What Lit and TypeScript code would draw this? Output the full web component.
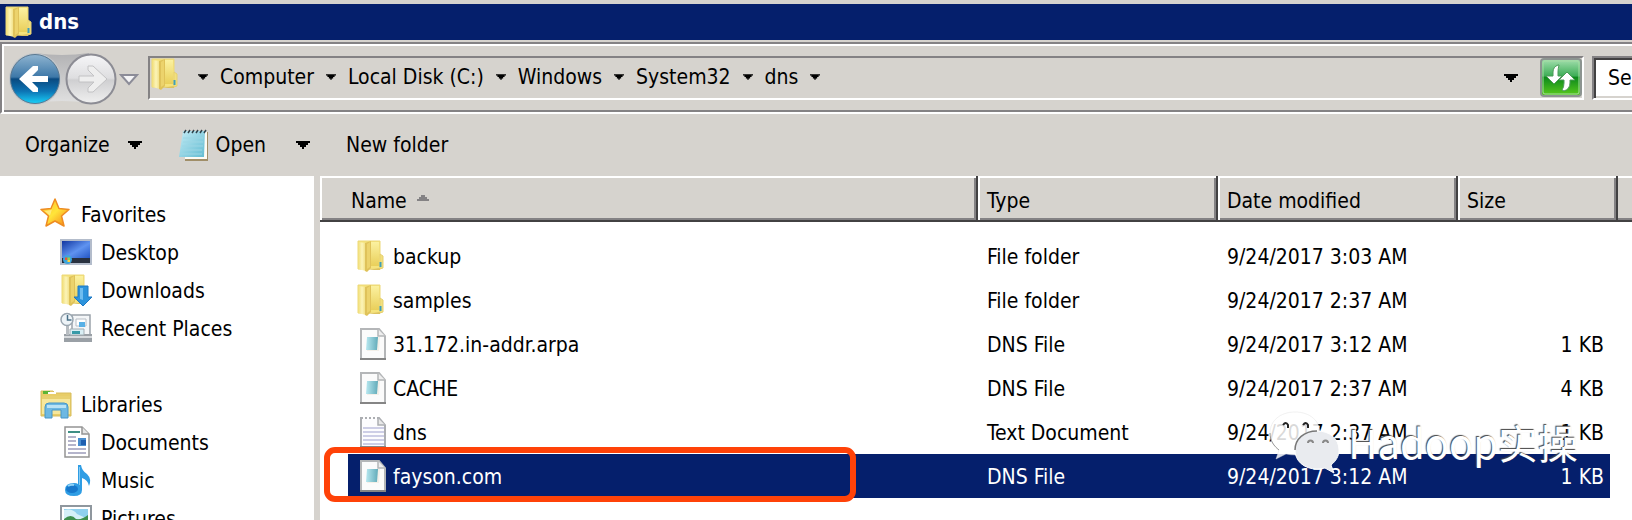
import { LitElement, html, css, svg, nothing } from "lit";
import { customElement } from "lit/decorators.js";

type IconName =
  | "folder" | "star" | "desktop" | "downloads" | "recent" | "libraries"
  | "documents" | "music" | "pictures" | "file" | "text" | "notepad";

interface Entry { name: string; icon: IconName; type: string; date: string; size: string; selected?: boolean; }

const crumbs = ["Computer", "Local Disk (C:)", "Windows", "System32", "dns"];

const entries: Entry[] = [
  { name: "backup", icon: "folder", type: "File folder", date: "9/24/2017 3:03 AM", size: "" },
  { name: "samples", icon: "folder", type: "File folder", date: "9/24/2017 2:37 AM", size: "" },
  { name: "31.172.in-addr.arpa", icon: "file", type: "DNS File", date: "9/24/2017 3:12 AM", size: "1 KB" },
  { name: "CACHE", icon: "file", type: "DNS File", date: "9/24/2017 2:37 AM", size: "4 KB" },
  { name: "dns", icon: "text", type: "Text Document", date: "9/24/2017 2:37 AM", size: "1 KB" },
  { name: "fayson.com", icon: "file", type: "DNS File", date: "9/24/2017 3:12 AM", size: "1 KB", selected: true },
];

const groups: { name: string; icon: IconName; items: { name: string; icon: IconName }[] }[] = [
  { name: "Favorites", icon: "star", items: [
    { name: "Desktop", icon: "desktop" },
    { name: "Downloads", icon: "downloads" },
    { name: "Recent Places", icon: "recent" },
  ] },
  { name: "Libraries", icon: "libraries", items: [
    { name: "Documents", icon: "documents" },
    { name: "Music", icon: "music" },
    { name: "Pictures", icon: "pictures" },
  ] },
];

const folderBody = svg`
  <path d="M2 1h22v28H2z" fill="#f5e37c" stroke="#ecd879" stroke-width="1"/>
  <path d="M15 2h8v24h-8z" fill="url(#fb)"/>
  <path d="M2 2l8 1v28l-8-2z" fill="url(#fa)"/>
  <path d="M9 3l6-2v27l-4 4-2-1z" fill="#dfc25a"/>
  <path d="M11 4l3-2v25l-3 2z" fill="#ecd36c"/>
  <path d="M12 30l12-2v2H12z" fill="#dcc260"/>
  <defs>
    <linearGradient id="fa" x1="0" x2="1"><stop offset="0" stop-color="#f0dc74"/><stop offset=".5" stop-color="#fcf4b8"/><stop offset="1" stop-color="#efdc7c"/></linearGradient>
    <linearGradient id="fb" x1="0" y1="0" x2="0" y2="1"><stop offset="0" stop-color="#fbf1a0"/><stop offset="1" stop-color="#e9cf5a"/></linearGradient>
  </defs>`;

const art: Record<IconName, unknown> = {
  folder: svg`${folderBody}
    <path d="M24 14l3 2v12l-3 1z" fill="#f2e07d" stroke="#e6d070"/>
    <path d="M23.500 22h2v5h-2z" fill="#3f9fb8"/>`,
  star: svg`<defs><linearGradient id="st" x1="0" y1="0" x2="1" y2="1"><stop offset="0" stop-color="#ffb52a"/><stop offset=".5" stop-color="#ffe53a"/><stop offset="1" stop-color="#f77b12"/></linearGradient></defs>
    <path d="M15 1l4 9.500 10 1-7.500 6.500 2.500 10-9-5-9 5 2.500-10L1 11.500l10-1z" fill="url(#st)" stroke="#ee8c22" stroke-width="1.500" stroke-linejoin="round"/>
    <path d="M14 5l-2.500 7-7 1 5.500 4.500z" fill="#fff19a" opacity=".7"/>`,
  desktop: svg`<defs><linearGradient id="ds" x1="0" y1="0" x2="1" y2="1"><stop offset="0" stop-color="#1236a0"/><stop offset=".55" stop-color="#5f93f0"/><stop offset="1" stop-color="#2456c4"/></linearGradient></defs>
    <path d="M0 3h32v26H0z" fill="#b3bccb"/><path d="M2 5h28v17H2z" fill="url(#ds)"/>
    <path d="M2 22h28v5H2z" fill="#28313f"/><circle cx="7.500" cy="23.500" r="4.500" fill="#3da5dc"/>
    <path d="M5 21.500h2.500V24H5z" fill="#e8543a"/><path d="M7.500 21.500H10V24H7.500z" fill="#8fd14f"/><path d="M7.500 24H10v2H7.500z" fill="#ffd23c"/>`,
  downloads: svg`${folderBody}
    <path d="M18 12h10v11h4l-9 9-9-9h4z" fill="#2c93dc" stroke="#1d78c4"/><path d="M20 14h3v12l-3-1z" fill="#6fbdf0"/>`,
  recent: svg`<path d="M12 3h18v20H12z" fill="#f4f6f8" stroke="#9aa3ab" stroke-width="1.500"/>
    <path d="M16 7h10v7H16z" fill="#fff" stroke="#b7bec6"/><path d="M19 10h6v5h-6z" fill="#58b0e6"/>
    <path d="M4 22h28v8H4z" fill="#9aa0a6"/><path d="M6 14h3v9H6z" fill="#b8bdc2"/>
    <path d="M10 17h14v6H10z" fill="#d8eef4" stroke="#a3adb3"/><path d="M12 19h8v3h-8z" fill="#379aa8"/>
    <path d="M4 24h28v2H4z" fill="#d7dadd"/>
    <circle cx="7" cy="7.500" r="6" fill="#eef4f8" stroke="#9aa6b0" stroke-width="1.500"/><path d="M7.500 3v5h4" fill="none" stroke="#4a7188" stroke-width="1.500"/>`,
  libraries: svg`<path d="M1 3h12l2 2h16v23H1z" fill="#e8cd68" stroke="#d8bd5c"/><path d="M3 3h7v3H3z" fill="#5cb536"/><path d="M8 4h8v2h-8z" fill="#fff"/>
    <path d="M2 9h28v17H2z" fill="#f6e79c"/><path d="M2 8h28v3H2z" fill="#e8d070"/>
    <path d="M5 19q0-4 4-4h15q4 0 4 4v11h-7v-8h-9v8H5z" fill="#6db8e2" stroke="#4796c8"/><path d="M7 17h19v3H7z" fill="#b9e2f5"/>`,
  documents: svg`<path d="M5 1h17l7 7v23H5z" fill="#fff" stroke="#949494" stroke-width="1.500"/><path d="M22 1v7h7" fill="#e6e6e6" stroke="#949494" stroke-width="1.500"/>
    <path d="M8 5h12v2H8z" fill="#3f8f84"/><path d="M8 11h8M8 15h8M8 19h8M8 23h18M8 27h18" stroke="#9c9cba" stroke-width="1.500"/>
    <path d="M18 12h8v8h-8z" fill="#4a8ed0"/><path d="M21 14h5v5h-5z" fill="#1f5fb0"/>`,
  music: svg`<path d="M18 1h3q1 6 6 9 5 5 2 12-1-6-7-8v12q0 6-8 6-9 0-9-6 0-7 9-7 3 0 4 1z" fill="#2f9de4"/>
    <ellipse cx="12" cy="25" rx="6" ry="4" fill="#1678cc"/><path d="M19 3h1v18h-1z" fill="#85caf3"/><path d="M8 22q3-2 6-1" stroke="#8ed2f8" stroke-width="2" fill="none"/>`,
  pictures: svg`<path d="M1 4h30v26H1z" fill="#fff" stroke="#8f979e" stroke-width="2"/><path d="M4 7h24v20H4z" fill="#8fd0ee"/>
    <path d="M4 8q9-2 13 4l11 5v10H4z" fill="#d5f0f8"/><path d="M4 17q7-6 12 0 6 1 12-4v14H4z" fill="#3e8f4d"/>`,
  file: svg`<defs><linearGradient id="fi"><stop offset="0" stop-color="#b8e8f0"/><stop offset="1" stop-color="#62abb9"/></linearGradient></defs>
    <path d="M5 1h18l6 7v23H5z" fill="#fbfbfb" stroke="#b4b6b8" stroke-width="2"/><path d="M22 1v7h7" fill="#eee" stroke="#b4b6b8" stroke-width="1.500"/>
    <path d="M12 9h12l-1 14H11z" fill="#f3efe8"/><path d="M11 9h11l-1 13H10z" fill="url(#fi)"/><path d="M4 31h26" stroke="#858585" stroke-width="2"/>`,
  text: svg`<path d="M5 2h18l6 7v22H5z" fill="#fcfcfe" stroke="#acaeb2" stroke-width="2"/><path d="M22 2v7h7" fill="#e8e8e8" stroke="#acaeb2" stroke-width="1.500"/>
    <path d="M7 2h15" stroke="#fff" stroke-width="3" stroke-dasharray="2 2"/>
    <path d="M7 12h21M7 16h21M7 20h21M7 24h21M7 28h21" stroke="#cdcee6" stroke-width="2"/><path d="M4 31h26" stroke="#858585" stroke-width="2"/>`,
  notepad: svg`<defs><linearGradient id="np" x1="0" y1="0" x2="1" y2="1"><stop offset="0" stop-color="#c4ecf5"/><stop offset="1" stop-color="#62bcd2"/></linearGradient></defs>
    <path d="M7 3h23v29H7z" fill="#a08e68"/><path d="M7 3h22v27H7z" fill="#fdfbf4"/>
    <path d="M5 2h22l-1 26H1z" fill="url(#np)"/>
    <path d="M5 9h20M5 13h20M4 17h21M4 21h20M3 25h21" stroke="#9cd6e4"/>
    <path d="M6 4l2-3M10 4l2-3M14 4l2-3M18 4l2-3M22 4l2-3M26 4l2-3" stroke="#30434c" stroke-width="1.500"/>`,
};

const icon = (name: IconName, cls = "") =>
  html`<svg class="icon ${cls}" viewBox="0 0 32 32" aria-hidden="true">${art[name]}</svg>`;

const caret = (big = false) => html`<svg class=${big ? "caret big" : "caret"} viewBox="0 0 14 8" aria-hidden="true">
  <path d="M0 0h14v2h-2v2h-2v2H8v2H6V6H4V4H2V2H0z"/></svg>`;

@customElement("app-root")
export class AppRoot extends LitElement {
  static styles = css`
    :host {
      display: flex; flex-direction: column; height: 100vh; overflow: hidden; position: relative;
      background: #d6d3ce; color: #000;
      font: 21px/26px "DejaVu Sans Condensed", "DejaVu Sans", Tahoma, sans-serif;
    }
    * { box-sizing: border-box; }
    button { font: inherit; color: inherit; background: none; border: 0; padding: 0; margin: 0; text-align: left; display: flex; align-items: center; white-space: nowrap; }
    a { color: inherit; text-decoration: none; }
    svg { display: block; flex: none; }
    .icon { width: 32px; height: 32px; }
    .caret { width: 10px; height: 6px; }
    .caret.big { width: 14px; height: 8px; }

    .title { margin: 4px 0 2px; padding: 0 4px; height: 36px; flex: none; display: flex; align-items: center; gap: 3px; background: #051f6c; color: #fff; }
    .title h1 { margin: 0; font-size: 22px; font-weight: bold; }

    .nav { flex: none; display: flex; align-items: center; height: 72px; padding: 0 0 0 6px;
      border-top: 2px solid #848284; border-left: 2px solid #848284; border-bottom: 2px solid #fff;
      box-shadow: inset 2px 2px #fff, inset 0 -2px #848284; }
    .travel { display: flex; align-items: center; margin-right: 8px; }
    .travel .pair { width: 110px; height: 56px; display: flex; position: relative; }
    .travel .pair > svg { position: absolute; inset: 0; width: 110px; height: 56px; }
    .travel .pair button { flex: 1; z-index: 1; }
    .history { width: 22px; justify-content: center; padding-top: 4px; }
    .history svg { width: 20px; height: 14px; }
    .address { flex: 1; min-width: 0; height: 44px; display: flex; align-items: center;
      border: 2px solid #fff; border-top-color: #848284; border-left-color: #848284; }
    .address .icon { margin-bottom: 8px; }
    .crumbs { display: flex; align-items: center; gap: 12px; margin: 0 0 2px 16px; padding: 0; list-style: none; flex: 1; }
    .crumbs li { display: flex; align-items: center; gap: 12px; white-space: nowrap; }
    .more { margin-right: 22px; }
    .refresh, .refresh svg { width: 42px; height: 40px; }
    .search { flex: none; width: 40px; height: 44px; margin-left: 8px; border: 2px solid #848284; border-right: 0; border-bottom-color: #fff;
      box-shadow: inset 2px 2px #424142, inset 0 -2px #d6d3ce; background: #fff; display: flex; padding: 2px 0 2px 14px; }
    .search input { flex: none; width: 160px; border: 0; padding: 0; background: none; font: inherit; color: #000; outline: 0; }
    .search input::placeholder { color: #000; opacity: 1; }

    .commands { flex: none; height: 62px; display: flex; align-items: center; padding-left: 25px; }
    .organize { gap: 18px; margin-right: 36px; }
    .open { gap: 6px; margin-right: 30px; }
    .arrow { margin-right: 36px; }

    .body { flex: 1; min-height: 0; display: flex; background: #fff; }
    .tree { flex: none; width: 320px; border-right: 6px solid #d6d3ce; padding-top: 19px; overflow: hidden; }
    .tree ul { list-style: none; margin: 0 0 38px; padding: 0; }
    .tree a { display: flex; align-items: center; gap: 9px; height: 38px; padding-left: 60px; white-space: nowrap; }
    .tree .group { padding-left: 40px; }
    .label { padding-top: 2px; }

    .list { flex: 1; min-width: 0; }
    table { width: 100%; table-layout: fixed; border-collapse: separate; border-spacing: 0; }
    .c-gutter { width: 28px; } .c-mid { width: 240px; } .c-size { width: 152px; } .c-pad { width: 8px; } .c-rest { width: 14px; }
    th { height: 46px; padding: 4px 9px 0; font-weight: normal; text-align: left; background: #d6d3ce;
      box-shadow: inset 0 -2px #424142, inset -2px 0 #424142, inset 2px 2px #fff, inset -4px -4px #848284; }
    th.first { padding-left: 31px; }
    th.last { box-shadow: inset 0 -2px #424142, inset 0 2px #fff, inset 0 -4px #848284; }
    th button { gap: 10px; width: 100%; }
    th .sort { width: 12px; height: 6px; margin-bottom: 6px; }
    tbody::before { content: ""; display: table-row; height: 12px; }
    td { height: 44px; padding: 2px 9px 0; white-space: nowrap; }
    .name { padding: 0 0 0 8px; position: relative; }
    .name a { display: flex; align-items: center; gap: 5px; }
    .size { text-align: right; padding-right: 6px; }
    .selected .fill { background: #051f6c; color: #fff; }
    .mark { position: absolute; left: -24px; top: -7px; width: 532px; height: 55px; border: 6px solid #ff4208; border-radius: 11px; pointer-events: none; }

    .watermark { position: absolute; right: 54px; bottom: 46px; display: flex; align-items: center; gap: 7px; pointer-events: none;
      font: 40px/56px "Noto Sans CJK SC", sans-serif; color: #fff; text-shadow: -1px -1px 1px #444; }
    .watermark svg { width: 72px; height: 64px; }
  `;

  render() {
    return html`
      <header class="title">${icon("folder")}<h1>dns</h1></header>
      <nav class="nav" aria-label="Location">
        <div class="travel">
          <div class="pair">
            <svg viewBox="0 0 110 56" aria-hidden="true">
              <defs>
                <linearGradient id="pl" x1="0" y1="0" x2="0" y2="1"><stop offset="0" stop-color="#b2b2b4"/><stop offset="1" stop-color="#e0e0e0"/></linearGradient>
                <linearGradient id="bk" x1="0" y1="0" x2="0" y2="1"><stop offset="0" stop-color="#8fb4d0"/><stop offset=".46" stop-color="#3d78a8"/><stop offset=".5" stop-color="#0a4a80"/><stop offset=".75" stop-color="#0d74b4"/><stop offset="1" stop-color="#19d0f8"/></linearGradient>
                <linearGradient id="fw" x1="0" y1="0" x2="0" y2="1"><stop offset="0" stop-color="#f6f6f8"/><stop offset=".48" stop-color="#dedee0"/><stop offset=".52" stop-color="#cfcfd1"/><stop offset="1" stop-color="#f0f0f0"/></linearGradient>
              </defs>
              <path d="M27 3q27 4 54 0v50q-27-4-54 0z" fill="url(#pl)"/>
              <circle cx="27" cy="29" r="26" fill="#c4c8cc"/>
              <circle cx="27" cy="29" r="24.500" fill="url(#bk)" stroke="#5a7890"/>
              <path d="M11 29l14-13h5v4l-6 6h16v6H24l6 6v4h-5z" fill="#fff"/>
              <circle cx="83" cy="29" r="24.500" fill="url(#fw)" stroke="#8c8c94" stroke-width="2"/>
              <path d="M99 29L85 16h-5v4l6 6H71v6h15l-6 6v4h5z" fill="#eeeeee" stroke="#c2c2c4"/>
            </svg>
            <button aria-label="Back"></button><button aria-label="Forward"></button>
          </div>
          <button class="history" aria-label="Recent locations">
            <svg viewBox="0 0 20 14"><path d="M2 2h16l-8 9z" fill="#f4f4f6" stroke="#8c8c98" stroke-width="2"/></svg>
          </button>
        </div>
        <div class="address">
          ${icon("folder")}
          <ol class="crumbs">
            <li>${caret()}</li>
            ${crumbs.map((c) => html`<li><a href="#">${c}</a>${caret()}</li>`)}
          </ol>
          <button class="more" aria-label="Previous locations">${caret(true)}</button>
          <button class="refresh" aria-label="Refresh">
            <svg viewBox="0 0 42 40">
              <defs><linearGradient id="rf" x1="0" y1="0" x2="0" y2="1"><stop offset="0" stop-color="#a5e0b0"/><stop offset=".45" stop-color="#3fae58"/><stop offset=".5" stop-color="#0d8a1c"/><stop offset="1" stop-color="#5ccc1c"/></linearGradient></defs>
              <rect x="1" y="1" width="40" height="37" rx="3" fill="url(#rf)" stroke="#8c9490" stroke-width="2"/>
              <rect x="3" y="3" width="36" height="33" rx="2" fill="none" stroke="#a6dca4" stroke-width="1"/>
              <path d="M18 7q-5 2-5 7v4H6l8 8 8-8h-4v-4q0-3 1-7z" fill="#fff" stroke="#4c9a58"/>
              <path d="M24 33q6-2 6-8v-3h5l-8-8-8 8h5v3q0 4-2 7z" fill="#fff" stroke="#4c9a58"/>
            </svg>
          </button>
        </div>
        <div class="search"><input type="text" aria-label="Search dns" placeholder="Search dns" /></div>
      </nav>
      <div class="commands" role="toolbar">
        <button class="organize">Organize ${caret(true)}</button>
        <button class="open">${icon("notepad")}Open</button>
        <button class="arrow" aria-label="Open with">${caret(true)}</button>
        <button>New folder</button>
      </div>
      <main class="body">
        <nav class="tree" aria-label="Folders">
          ${groups.map((g) => html`<ul>
            <li><a class="group" href="#">${icon(g.icon)}<span class="label">${g.name}</span></a></li>
            ${g.items.map((i) => html`<li><a href="#">${icon(i.icon)}<span class="label">${i.name}</span></a></li>`)}
          </ul>`)}
        </nav>
        <section class="list">
          <table>
            <colgroup><col class="c-gutter" /><col /><col class="c-mid" /><col class="c-mid" /><col class="c-size" /><col class="c-pad" /><col class="c-rest" /></colgroup>
            <thead><tr>
              <th class="first" colspan="2"><button>Name <svg class="sort" viewBox="0 0 12 6"><path d="M0 6V4h2V2h2V0h4v2h2v2h2v2z" fill="#848284"/></svg></button></th>
              <th><button>Type</button></th>
              <th><button>Date modified</button></th>
              <th colspan="2"><button>Size</button></th>
              <th class="last"></th>
            </tr></thead>
            <tbody>
              ${entries.map((e) => html`<tr class=${e.selected ? "selected" : ""}>
                <td></td>
                <td class="name fill"><a href="#">${icon(e.icon)}<span class="label">${e.name}</span></a>${e.selected ? html`<div class="mark"></div>` : nothing}</td>
                <td class="fill">${e.type}</td>
                <td class="fill">${e.date}</td>
                <td class="size fill">${e.size}</td>
                <td colspan="2"></td>
              </tr>`)}
            </tbody>
          </table>
        </section>
      </main>
      <div class="watermark">
        <svg viewBox="0 0 72 64" aria-hidden="true">
          <path d="M26 2C11 2 1 11 1 23c0 8 4 13 9 17l-3 9 10-5q5 1 9 1c15 0 25-10 25-22S41 2 26 2z" fill="#fff" fill-opacity=".85" stroke="#ddd" stroke-opacity=".4"/>
          <path d="M1 23c0 8 4 13 9 17" fill="none" stroke="#999"/>
          <path d="M14 15q3-4 5 0v3M34 15q3-4 5 0v3" fill="none" stroke="#222" stroke-width="2"/>
          <path d="M48 21c-13 0-22 8-22 19s9 19 22 19q4 0 8-1l9 5-3-8c5-4 8-9 8-15 0-11-9-19-22-19z" fill="#e9ebef" stroke="#fff"/>
          <path d="M26 40c0-11 9-19 22-19" fill="none" stroke="#777" stroke-width="1.500"/>
          <path d="M39 33a2 2 0 0 1 5 0M54 33a2 2 0 0 1 5 0" fill="none" stroke="#888" stroke-width="2"/>
        </svg>
        <span>Hadoop实操</span>
      </div>
    `;
  }
}
